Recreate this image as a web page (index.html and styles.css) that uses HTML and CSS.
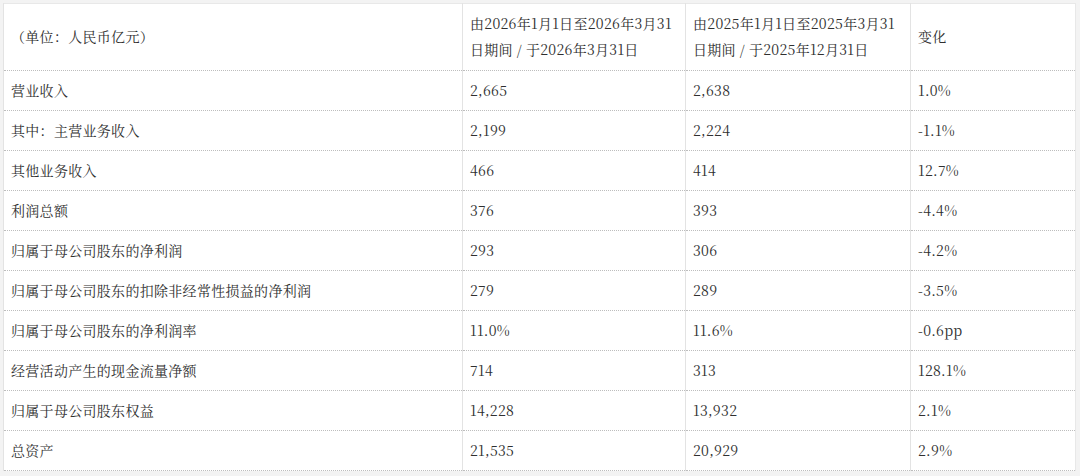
FILE: index.html
```html
<!DOCTYPE html>
<html lang="zh-CN">
<head>
<meta charset="utf-8">
<title>财务摘要</title>
<link rel="stylesheet" href="styles.css">
</head>
<body>
<table class="fin">
  <colgroup>
    <col class="c1"><col class="c2"><col class="c3"><col class="c4">
  </colgroup>
  <thead>
    <tr>
      <th>（单位：人民币亿元）</th>
      <th>由2026年1月1日至2026年3月31<br>日期间 / 于2026年3月31日</th>
      <th>由2025年1月1日至2025年3月31<br>日期间 / 于2025年12月31日</th>
      <th>变化</th>
    </tr>
  </thead>
  <tbody>
    <tr><td>营业收入</td><td>2,665</td><td>2,638</td><td>1.0%</td></tr>
    <tr><td>其中：主营业务收入</td><td>2,199</td><td>2,224</td><td>-1.1%</td></tr>
    <tr><td>其他业务收入</td><td>466</td><td>414</td><td>12.7%</td></tr>
    <tr><td>利润总额</td><td>376</td><td>393</td><td>-4.4%</td></tr>
    <tr><td>归属于母公司股东的净利润</td><td>293</td><td>306</td><td>-4.2%</td></tr>
    <tr><td>归属于母公司股东的扣除非经常性损益的净利润</td><td>279</td><td>289</td><td>-3.5%</td></tr>
    <tr><td>归属于母公司股东的净利润率</td><td>11.0%</td><td>11.6%</td><td>-0.6pp</td></tr>
    <tr><td>经营活动产生的现金流量净额</td><td>714</td><td>313</td><td>128.1%</td></tr>
    <tr><td>归属于母公司股东权益</td><td>14,228</td><td>13,932</td><td>2.1%</td></tr>
    <tr><td>总资产</td><td>21,535</td><td>20,929</td><td>2.9%</td></tr>
  </tbody>
</table>
</body>
</html>
```
FILE: styles.css
```css
html, body {
  background: #f3f3f3;
}
body {
  margin: 3px;
  font-family: "Noto Serif CJK SC", "Liberation Serif", "Noto Sans CJK SC", serif;
  font-size: 14px;
  color: #2f2f2f;
}
.fin {
  width: 1072px;
  border-collapse: collapse;
  table-layout: fixed;
  background: #fff;
  border-top: 1px solid #e8e8e8;
  border-left: 1px solid #e8e8e8;
  border-right: 1px solid #e8e8e8;
}
.c1 { width: 459px; }
.c2 { width: 223px; }
.c3 { width: 225px; }
.c4 { width: 165px; }
.fin th, .fin td {
  text-align: left;
  font-weight: normal;
  vertical-align: middle;
  padding: 7px 7px;
  line-height: 25px;
  letter-spacing: 0.3px;
  border-left: 1px solid #e3e3e3;
  border-bottom: 1px dotted #bdbdbd;
  white-space: nowrap;
}
.fin th {
  line-height: 26px;
  padding-top: 6px;
  padding-bottom: 8px;
}
```
